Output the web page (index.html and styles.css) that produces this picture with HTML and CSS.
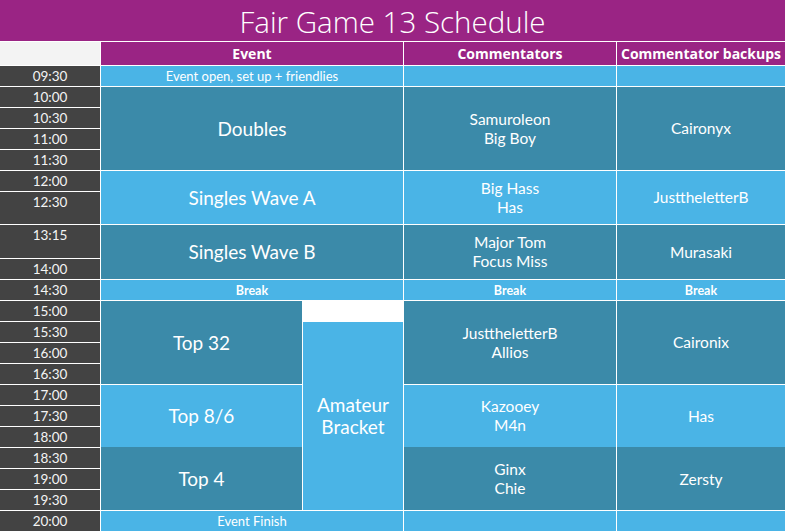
FILE: index.html
```html
<!DOCTYPE html>
<html>
<head>
<meta charset="utf-8">
<link rel="stylesheet" href="styles.css">
</head>
<body>
<div class="sheet">
  <div class="title">Fair Game 13 Schedule</div>
  <div class="corner"></div>
  <div class="head h-event">Event</div>
  <div class="head h-comm">Commentators</div>
  <div class="head h-back">Commentator backups</div>

  <div class="time">09:30</div>
  <div class="time">10:00</div>
  <div class="time">10:30</div>
  <div class="time">11:00</div>
  <div class="time">11:30</div>
  <div class="time">12:00</div>
  <div class="time">12:30</div>
  <div class="time">13:15</div>
  <div class="time">14:00</div>
  <div class="time">14:30</div>
  <div class="time">15:00</div>
  <div class="time">15:30</div>
  <div class="time">16:00</div>
  <div class="time">16:30</div>
  <div class="time">17:00</div>
  <div class="time">17:30</div>
  <div class="time">18:00</div>
  <div class="time">18:30</div>
  <div class="time">19:00</div>
  <div class="time">19:30</div>
  <div class="time">20:00</div>

  <div class="cell light small ev r-open">Event open, set up + friendlies</div>
  <div class="cell light co r-open"></div>
  <div class="cell light bk r-open"></div>

  <div class="cell dark big ev r-doubles">Doubles</div>
  <div class="cell dark name co r-doubles">Samuroleon<br>Big Boy</div>
  <div class="cell dark name bk r-doubles">Caironyx</div>

  <div class="cell light big ev r-swa">Singles Wave A</div>
  <div class="cell light name co r-swa">Big Hass<br>Has</div>
  <div class="cell light name bk r-swa">JusttheletterB</div>

  <div class="cell dark big ev r-swb">Singles Wave B</div>
  <div class="cell dark name co r-swb">Major Tom<br>Focus Miss</div>
  <div class="cell dark name bk r-swb">Murasaki</div>

  <div class="cell light small semi ev r-break">Break</div>
  <div class="cell light small semi co r-break">Break</div>
  <div class="cell light small semi bk r-break">Break</div>

  <div class="cell dark big main r-top32">Top 32</div>
  <div class="cell dark name co r-top32">JusttheletterB<br>Allios</div>
  <div class="cell dark name bk r-top32">Caironix</div>

  <div class="cell light big amateur">Amateur<br>Bracket</div>

  <div class="cell light big main r-top8">Top 8/6</div>
  <div class="cell light name co r-top8">Kazooey<br>M4n</div>
  <div class="cell light name bk r-top8">Has</div>

  <div class="cell dark big main r-top4 joined">Top 4</div>
  <div class="cell dark name co r-top4 joined">Ginx<br>Chie</div>
  <div class="cell dark name bk r-top4 joined">Zersty</div>

  <div class="cell light small ev r-finish">Event Finish</div>
  <div class="cell light co r-finish"></div>
  <div class="cell light bk r-finish"></div>
</div>
</body>
</html>
```

FILE: styles.css
```css
html, body {
  margin: 0;
  padding: 0;
  background: #ffffff;
  overflow: hidden;
}

body {
  font-family: "Lato", "Open Sans", sans-serif;
  color: #ffffff;
}

.sheet {
  display: grid;
  grid-template-columns: 100px 201px 100px 212px 168px;
  grid-template-rows: 41px 23px repeat(6, 20px) 32px 33px repeat(13, 20px);
  gap: 1px;
  background: #ffffff;
  width: 786px;
}

.title {
  grid-column: 1 / -1;
  grid-row: 1;
  background: #9a2484;
  display: flex;
  align-items: center;
  justify-content: center;
  font-family: "Open Sans", sans-serif;
  font-weight: 300;
  font-size: 29.5px;
  padding-top: 2px;
}

.corner {
  grid-row: 2;
  grid-column: 1;
  background: #f3f3f3;
}

.head {
  grid-row: 2;
  background: #9a2484;
  font-family: "Open Sans", sans-serif;
  font-weight: 700;
  font-size: 14px;
  display: flex;
  align-items: center;
  justify-content: center;
  white-space: nowrap;
}

.h-event { grid-column: 2 / 4; }
.h-comm { grid-column: 4; }
.h-back { grid-column: 5; }

.time {
  grid-column: 1;
  background: #434343;
  color: #f4f4f4;
  font-size: 13.5px;
  line-height: 20px;
  text-align: center;
}

.cell {
  display: flex;
  align-items: center;
  justify-content: center;
  text-align: center;
  white-space: nowrap;
}

.light { background: #4ab4e6; }
.dark { background: #3b8aa9; }

.small { font-size: 13px; }
.semi { font-weight: 700; font-size: 12.5px; }
.big { font-size: 19px; line-height: 22px; }
.name { font-size: 15.5px; line-height: 19px; }

.ev { grid-column: 2 / 4; }
.main { grid-column: 2; }
.co { grid-column: 4; }
.bk { grid-column: 5; }

.r-open { grid-row: 3; }
.r-doubles { grid-row: 4 / 8; }
.r-swa { grid-row: 8 / 10; }
.r-swb { grid-row: 10 / 12; }
.r-break { grid-row: 12; }
.r-top32 { grid-row: 13 / 17; }
.r-top8 { grid-row: 17 / 20; }
.r-top4 { grid-row: 20 / 23; }
.r-finish { grid-row: 23; }

.amateur {
  grid-column: 3;
  grid-row: 14 / 23;
}

.joined {
  box-shadow: 0 -1px 0 #3b8aa9;
}
```
